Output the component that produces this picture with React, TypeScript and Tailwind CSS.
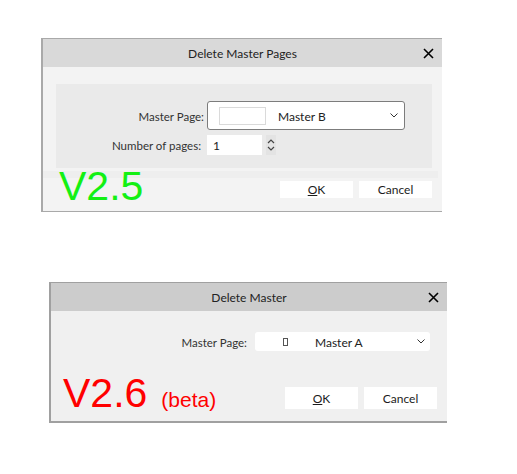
import React from 'react';

const font = { fontFamily: 'Lato, "Noto Sans", sans-serif' };

const CloseIcon = () => (
  <svg width="11" height="11" viewBox="0 0 11 11" className="text-black">
    <path d="M1 1 L10 10 M10 1 L1 10" stroke="currentColor" strokeWidth="1.6" fill="none" />
  </svg>
);

const Chevron = () => (
  <svg width="8" height="5" viewBox="0 0 8 5">
    <path d="M0.5 0.5 L4 4 L7.5 0.5" stroke="#333" strokeWidth="1" fill="none" />
  </svg>
);

const Spinner = () => (
  <svg width="8" height="14" viewBox="0 0 8 14">
    <path d="M1 5 L4 2 L7 5 M1 9 L4 12 L7 9" stroke="#444" strokeWidth="1.2" fill="none" />
  </svg>
);

const Btn = ({ children }: { children: React.ReactNode }) => (
  <button className="w-[73px] h-full bg-white text-[12px] text-[#1b1b1b] flex items-center justify-center pt-[1px]">
    {children}
  </button>
);

const App: React.FC = () => {
  return (
    <div className="w-[517px] h-[474px] bg-white pt-[38px]" style={font}>
      {/* old dialog */}
      <div className="ml-[41px] w-[401px] h-[174px] bg-[#f3f3f3] border-l-2 border-t border-b border-[#a9a9a9] flex flex-col">
        <div className="h-[28px] bg-[#d9d9d9] relative flex items-center justify-center pt-[2px] text-[12px] text-[#222]">
          Delete Master Pages
          <div className="absolute right-[8px] top-[9px]"><CloseIcon /></div>
        </div>
        <div className="mt-[17px] ml-[13px] mr-[10px] h-[84px] bg-[#eaeaea] pt-[17px]">
          <div className="flex items-center h-[29px]">
            <div className="w-[148px] text-right text-[11.5px] text-[#333] pt-[2px]">Master Page:</div>
            <div className="ml-[3px] w-[198px] h-[29px] bg-white border border-[#7c7c7c] rounded-[3px] flex items-center pl-[11px] pr-[6px]">
              <div className="w-[47px] h-[18px] border border-[#dadada]" />
              <div className="ml-[12px] text-[12px] text-[#222] flex-1 pt-[2px]">Master B</div>
              <Chevron />
            </div>
          </div>
          <div className="flex items-center h-[20px] mt-[5px]">
            <div className="w-[145px] text-right text-[11.5px] text-[#333] pt-[2px]">Number of pages:</div>
            <div className="ml-[6px] w-[55px] h-[20px] bg-white text-[12px] text-[#222] flex items-center pl-[6px] pt-[2px]">1</div>
            <div className="ml-[4px] w-[10px] h-[20px] bg-[#e3e3e3] flex items-center justify-center"><Spinner /></div>
          </div>
        </div>
        <div className="relative flex-1">
          <div className="mt-[3px] mr-[4px] h-[7px] bg-[#eeeeee]" />
          <div className="absolute left-[16px] top-[-2px] text-[41px] leading-none text-[#14f014]" style={{ fontFamily: '"Liberation Sans", Arial, sans-serif' }}>
            V2.5
          </div>
          <div className="flex justify-end gap-[6px] mr-[10px] mt-[3px] h-[17px]">
            <Btn><span className="underline">O</span>K</Btn>
            <Btn>Cancel</Btn>
          </div>
        </div>
      </div>

      {/* new dialog */}
      <div className="mt-[70px] ml-[49px] w-[398px] h-[141px] bg-[#f0f0f0] border-l-2 border-t border-b-2 border-[#a0a0a0] flex flex-col">
        <div className="h-[28px] bg-[#cccccc] relative flex items-center justify-center pt-[2px] text-[12px] text-[#222]">
          Delete Master
          <div className="absolute right-[8px] top-[9px]"><CloseIcon /></div>
        </div>
        <div className="flex items-center mt-[21px] h-[19px]">
          <div className="w-[196px] text-right text-[11.5px] text-[#333] pt-[2px]">Master Page:</div>
          <div className="ml-[8px] w-[175px] h-[19px] bg-white rounded-[3px] flex items-center pr-[5px]">
            <div className="ml-[28px] w-[5px] h-[8px] border border-[#555]" />
            <div className="ml-[27px] text-[12px] text-[#222] flex-1 pt-[2px]">Master A</div>
            <Chevron />
          </div>
        </div>
        <div className="flex items-end justify-between mt-[22px] mr-[10px]">
          <div className="ml-[12px] mb-[1px] flex items-baseline text-[#ff0000]" style={{ fontFamily: '"Liberation Sans", Arial, sans-serif' }}>
            <span className="text-[41px] leading-none">V2.6</span>
            <span className="ml-[14px] text-[21px] leading-none">(beta)</span>
          </div>
          <div className="flex gap-[6px] h-[22px] mb-[6px]">
            <Btn><span className="underline">O</span>K</Btn>
            <Btn>Cancel</Btn>
          </div>
        </div>
      </div>
    </div>
  );
};

export default App;
